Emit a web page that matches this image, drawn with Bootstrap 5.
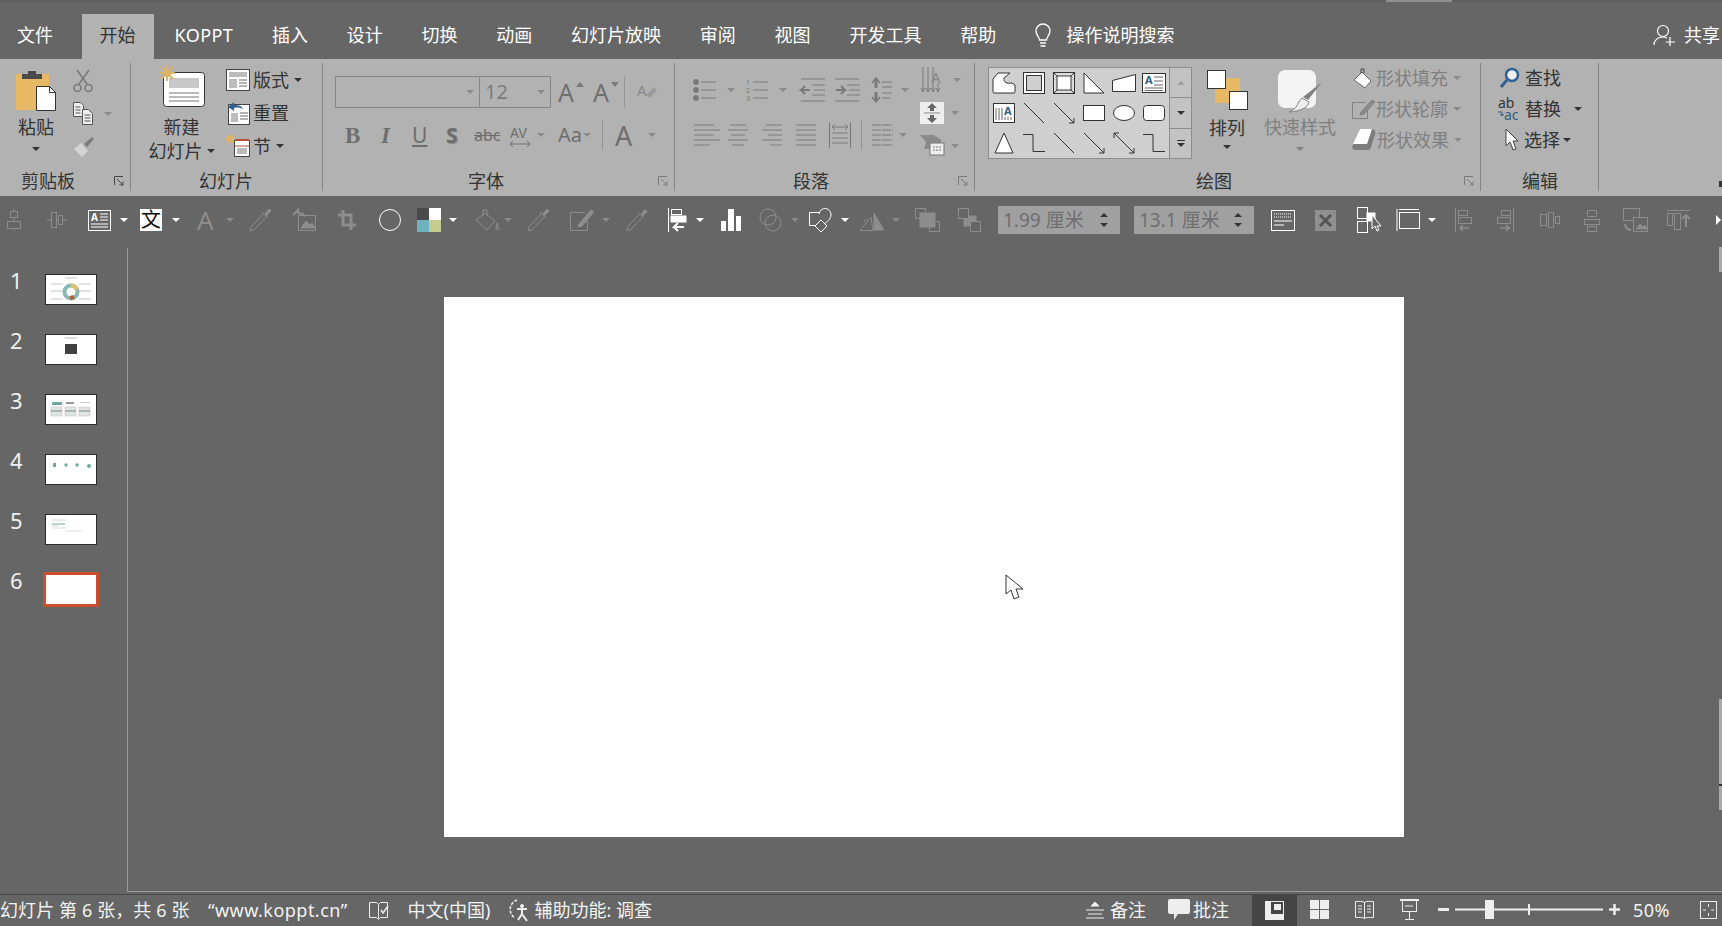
<!DOCTYPE html>
<html lang="zh-CN">
<head>
<meta charset="utf-8">
<title>PowerPoint</title>
<link rel="stylesheet" href="https://cdn.jsdelivr.net/npm/bootstrap@5.3.0/dist/css/bootstrap.min.css">
<style>
html,body{height:100%}
body{width:1722px;height:926px;overflow:hidden;background:#666;font-family:"Noto Sans","Noto Sans CJK SC",sans-serif;font-size:18px;line-height:24px;color:#fff}
svg{display:block;flex:none;overflow:visible}
.s1{margin-left:1px}.s2{margin-left:2px}.s3{margin-left:3px}.s4{margin-left:4px}.s5{margin-left:5px}.s6{margin-left:6px}.s7{margin-left:7px}.s8{margin-left:8px}.s9{margin-left:9px}.s10{margin-left:10px}.s11{margin-left:11px}.s12{margin-left:12px}.s13{margin-left:13px}.s14{margin-left:14px}.s15{margin-left:15px}.s16{margin-left:16px}.s17{margin-left:17px}.s18{margin-left:18px}.s19{margin-left:19px}.s20{margin-left:20px}.s21{margin-left:21px}.s22{margin-left:22px}.s23{margin-left:23px}.s24{margin-left:24px}.s25{margin-left:25px}.s26{margin-left:26px}.s30{margin-left:30px}
.topbar{height:59px;background:#666}
.topline{height:2px;background:#5f5f5f}
.topmark{width:66px;height:2px;margin-left:1386px;background:#8f8f8f}
.tabrow{height:57px;padding-top:12px}
.tabitem{height:45px;padding:0 19.4px 3px;display:flex;align-items:center;color:#fff;white-space:nowrap}
.tabfile{padding:0 29px 3px 17px}
.tabhome{padding:0 18.500px 3px 17.500px;background:#b3b3b3;color:#333}
.tabkop{letter-spacing:.4px;padding-left:20.500px}
.tabbulb{padding-left:0;padding-right:0;margin-left:18px}
.tabsearch{padding:0 0 3px;margin-left:15px}
.tabshare{margin-left:auto;padding:0 2px 3px 0}
.ribbon{height:137px;background:#b2b2b2;color:#333}
.rgroup{height:128px;margin-top:4px;display:flex;flex-direction:column;border-right:1px solid #858585;flex:none}
.w1{width:131px}.w2{width:192px}.w3{width:352px}.w4{width:300px}.w5{width:506px}.w6{width:118px}
.rbody{height:109px;display:flex}
.rlabel{height:20px;line-height:20px;display:flex;align-items:center;margin-top:-1px;color:#333}
.l1{margin-left:21px}.l2{margin-left:68px}.l3{margin-left:145px}.l4{margin-left:118px}.l5{margin-left:221px}.l6{margin-left:41px}
.launch{margin-left:auto;margin-right:6px}
.rcolumn{display:flex;flex-direction:column;align-items:center}
.col-paste{width:52px;margin-left:10px;padding-top:5px}
.col-new{width:67px;margin-left:17px;padding-top:2px}
.col-arr{width:62px;margin-left:4px;padding-top:7px}
.col-quick{width:86px;margin-left:-1px;padding-top:7px}
.tx-top{margin-top:4px}
.tx-arr{margin-top:6px}
.tx-quick{margin-top:2px}
.tx-new{margin-top:8px}
.cr-low{margin-top:8px}
.cr-arr{margin-top:5px}
.rw33{height:33px;display:flex;align-items:center;white-space:nowrap}
.rw32{height:32px;display:flex;align-items:center;white-space:nowrap}
.rw31{height:31px;display:flex;align-items:center;white-space:nowrap}
.stack-clip{padding-top:1px}
.stack-slide{padding-top:0}
.stack31{margin-top:-1px}
.stack-para{padding-top:1px}
.gaprow{margin-top:11px}
.gaprow2{margin-top:13px}
.pad11{padding-top:11px}
.pad13{padding-top:13px}
.cr{display:inline-block;flex:none;width:8px;height:4px;border-style:solid;border-width:4px 4px 0;border-color:#3c3c3c transparent transparent}
.cr.dim{border-top-color:#808080}
.cr.wh{border-top-color:#fff}
.cr.dk{border-top-color:#8a8a8a}
.cr.up{border-width:0 4px 4px;border-color:transparent transparent #333}
.cr.dn{border-top-color:#333}
.dimtx{color:#808080}
.combo{height:32px;border:1px solid #868686;display:flex;align-items:center;flex:none;color:#7c7c7c;font-size:20px}
.combo1{width:145px;justify-content:flex-end;padding-right:5px}
.combo2{width:71px;border-left:0;padding:0 5px;justify-content:space-between}
.fx{color:#6e6e6e;flex:none;display:block;line-height:1}
.fx-b{font-family:"Liberation Serif",serif;font-weight:700;font-size:23px;width:14px}
.fx-i{font-family:"Liberation Serif",serif;font-style:italic;font-weight:700;font-size:23px;width:12px}
.fx-u{font-size:21px;width:14px;text-decoration:underline}
.fx-s{font-weight:700;font-size:21px;width:14px;text-shadow:1px 1px 1px #888}
.fx-abc{font-size:16px;width:28px;text-decoration:line-through}
.fx-aa{font-size:20px;width:24px}
.fx-a{font-size:27px;width:17px}
.fx-big{font-size:25px;width:18px}
.vsep{width:1px;height:30px;background:#959595;flex:none}
.gallery{width:204px;height:92px;margin:4px 0 0 13px;background:#cfcfcf;border:1px solid #8d8d8d;display:flex;flex:none}
.gal-grid{width:180px;display:grid;grid-template-columns:repeat(6,1fr);grid-template-rows:repeat(3,1fr);justify-items:center;align-items:center}
.gal-side{flex:1;border-left:1px solid #8d8d8d;display:flex;flex-direction:column;background:#c3c3c3}
.gal-btn{flex:1;display:flex;align-items:center;justify-content:center;flex-direction:column;gap:2px}
.gal-btn+.gal-btn{border-top:1px solid #8d8d8d}
.bar{display:block;width:8px;height:1px;background:#333}
.edge-mark{width:3px;height:6px;background:#333;margin:122px 0 0 0}
.ribbon-rest{flex:1;display:flex;justify-content:flex-end}
.toolstrip{height:52px;padding-bottom:4px;background:#666;display:flex;align-items:center}
.tb-wen{width:22px;height:22px;background:#fff;color:#111;font-size:20px;line-height:22px;text-align:center;flex:none}
.tb-a{width:16px;color:#8d8d8d;font-size:26px;line-height:1;flex:none}
.spin{height:28px;background:#a0a0a0;display:flex;align-items:center;flex:none;color:#6f6f6f;font-size:19px;white-space:nowrap;padding:0 5px}
.spin1{width:122px}.spin2{width:120px}
.spin-ar{margin-left:auto;display:flex;flex-direction:column;gap:6px;margin-right:7px}
.wedge{width:0;height:0;border-style:solid;border-width:5px 0 5px 5px;border-color:transparent transparent transparent #fff;flex:none}
.mainrow{height:644px;display:flex}
.pane{width:128px;border-right:1px solid #9a9a9a;border-bottom:0;padding-top:26px;flex:none}
.thumbrow{height:60px;display:flex}
.numlabel{width:12px;margin-left:10px;margin-top:-6px;font-size:22px;line-height:24px;color:#f0f0f0}
.thumbbox{margin-left:23px;width:52px;height:31px;background:#fff;outline:1px solid #2b2b2b;outline-offset:-1px}
.thumbbox.sel{outline:3px solid #c8502e;outline-offset:-1px}
.canvas{flex:1;border-bottom:1px solid #9a9a9a;display:flex;justify-content:center;padding-top:49px}
.slidepage{width:960px;height:540px;background:#fff;position:relative;flex:none}
.arrowptr{position:absolute;left:561px;top:277px}
.scrollstrip{width:3px;border-bottom:1px solid #9a9a9a;flex:none;display:flex;flex-direction:column}
.sc1{height:25px;background:#aaa;margin-top:-1px}
.sc2{height:427px}
.sc3{height:85px;background:#aaa}
.sc4{height:2px;background:#333}
.sc5{height:24px;background:#aaa}
.statusbar{height:34px;padding-top:2px;background:#666}
.statusin{height:32px;border-top:1px solid #484848;padding-bottom:2px;display:flex;align-items:center;white-space:nowrap;color:#f3f3f3;padding-right:5px}
.st-1{width:190px;flex:none;letter-spacing:.1px}
.st-q{letter-spacing:.47px}
.st-act{width:45px;height:31px;margin-bottom:-2px;background:#454545;display:flex;align-items:center;justify-content:center;flex:none}
.st-right{margin-left:auto}
.st-pct{letter-spacing:.5px}
</style>
</head>
<body>
<div class="topbar">
  <div class="topline"><div class="topmark"></div></div>
  <nav class="tabrow d-flex">
    <div class="tabitem tabfile">文件</div>
    <div class="tabitem tabhome">开始</div>
    <div class="tabitem tabkop">KOPPT</div>
    <div class="tabitem">插入</div>
    <div class="tabitem">设计</div>
    <div class="tabitem">切换</div>
    <div class="tabitem">动画</div>
    <div class="tabitem">幻灯片放映</div>
    <div class="tabitem">审阅</div>
    <div class="tabitem">视图</div>
    <div class="tabitem">开发工具</div>
    <div class="tabitem">帮助</div>
    <div class="tabitem tabbulb"><svg width="18" height="24" viewBox="0 0 18 24" fill="none" stroke="#fff" stroke-width="1.3"><path d="M5.5 17c0-3-3.5-4.500-3.500-9a7 7 0 0 1 14 0c0 4.500-3.500 6-3.500 9z"/><path d="M6 20h6M6.500 23h5"/></svg></div>
    <div class="tabitem tabsearch">操作说明搜索</div>
    <div class="tabitem tabshare"><svg width="23" height="23" viewBox="0 0 23 23" fill="none" stroke="#fff" stroke-width="1.200" class="me-2"><circle cx="10" cy="7" r="5.500"/><path d="M1 21c0-5 4-8 9-8 2 0 3 .5 4 1"/><path d="M17 13v9M13 18h9"/></svg>共享</div>
  </nav>
</div>

<div class="ribbon d-flex">
  <!-- clipboard -->
  <section class="rgroup w1">
    <div class="rbody">
      <div class="rcolumn col-paste">
        <svg width="40" height="43" viewBox="0 0 40 43"><rect x="0" y="6" width="33" height="36" fill="#e8b964"/><path d="M6 6h6V3h8v3h6v5H6z" fill="#4a4a4a"/><path d="M20.500 18.500h13l6 6v18h-19z" fill="#fff" stroke="#333"/><path d="M33.500 18.500v6h6" fill="none" stroke="#333"/></svg>
        <div class="tx-top">粘贴</div>
        <span class="cr dn cr-low"></span>
      </div>
      <div class="stack-clip s11">
        <div class="rw33"><svg width="20" height="24" viewBox="0 0 20 24" fill="none" stroke="#7b7b7b" stroke-width="1.700"><path d="M4 1l10 14M16 1L6 15"/><circle cx="4.500" cy="19" r="3.500"/><circle cx="15.500" cy="19" r="3.500"/></svg></div>
        <div class="rw33"><svg width="20" height="23" viewBox="0 0 20 23" fill="#eee" stroke="#555"><path d="M.5.500h7l3 3v11H.500z"/><path d="M9.500 7.500h6l4 4v11h-10z"/><path d="M2.500 5h5M2.500 8h5M2.500 11h5M11.500 13h6M11.500 16h6M11.500 19h6" fill="none"/></svg><span class="cr dk s11"></span></div>
        <div class="rw33"><svg width="22" height="22" viewBox="0 0 22 22"><path d="M1 13l7-6 7 8-6 6z" fill="#d3d3d3"/><path d="M11 8l8-7 2 2-7 8z" fill="#7b7b7b"/></svg></div>
      </div>
    </div>
    <div class="rlabel"><span class="l1">剪贴板</span><svg class="launch" width="10" height="10" viewBox="0 0 10 10" fill="none" stroke="#444"><path d="M.5 9V.500H9M3 3l6 6M5.500 9H9V5.500"/></svg></div>
  </section>

  <!-- slides -->
  <section class="rgroup w2">
    <div class="rbody">
      <div class="rcolumn col-new">
        <svg width="46" height="42" viewBox="0 0 46 42"><rect x="4.500" y="7.500" width="41" height="34" rx="3" fill="#fff" stroke="#333"/><rect x="10" y="13" width="30" height="10" fill="#c8c8c8"/><path d="M10 28h30M10 32h30M10 36h30" stroke="#777"/><path d="M8 0v16M0 8h16M2 2l12 12M14 2L2 14" stroke="#dcb36a" stroke-width="2"/><circle cx="8" cy="8" r="4" fill="#dcb36a"/></svg>
        <div class="tx-new">新建</div>
        <div class="d-flex align-items-center">幻灯片<span class="cr dn s4"></span></div>
      </div>
      <div class="stack-slide s11">
        <div class="rw33"><svg width="24" height="22" viewBox="0 0 24 22"><rect x=".5" y=".5" width="23" height="21" fill="#fff" stroke="#444"/><rect x="3" y="3" width="18" height="5" fill="#bbb"/><rect x="3" y="10" width="8" height="9" fill="#bbb"/><path d="M13 11h8M13 14h8M13 17h8" stroke="#666"/></svg><span class="s3">版式</span><span class="cr dn s5"></span></div>
        <div class="rw33"><svg width="24" height="24" viewBox="0 0 24 24"><rect x="2.500" y="3.500" width="21" height="20" fill="#fff" stroke="#444"/><rect x="5" y="12" width="7" height="9" fill="#bbb"/><path d="M14 12h8M14 15h8M14 18h8" stroke="#666"/><path d="M2 6l6-5v3c5 0 8 1 9 4-2-1-5-2-9-1v3z" fill="#2f6191"/></svg><span class="s3">重置</span></div>
        <div class="rw33"><svg width="24" height="24" viewBox="0 0 24 24"><circle cx="4" cy="5" r="4" fill="#dcb36a"/><rect x="8.500" y="6.500" width="15" height="16" fill="#fff" stroke="#444"/><path d="M9 6h14" stroke="#b2523b" stroke-width="2"/><path d="M9 12h14" stroke="#b2523b"/><rect x="11" y="14" width="10" height="6" fill="#bbb"/></svg><span class="s3">节</span><span class="cr dn s5"></span></div>
      </div>
    </div>
    <div class="rlabel"><span class="l2">幻灯片</span></div>
  </section>

  <!-- font -->
  <section class="rgroup w3">
    <div class="rbody flex-column pad13">
      <div class="rw32">
        <div class="combo combo1 s12"><span class="cr dk"></span></div>
        <div class="combo combo2"><span>12</span><span class="cr dk"></span></div>
        <span class="fx fx-big s7">A</span><svg width="8" height="5" viewBox="0 0 8 5" class="mb-3"><path d="M0 5l4-5 4 5z" fill="#7a7a7a"/></svg>
        <span class="fx fx-big s9">A</span><svg width="8" height="5" viewBox="0 0 8 5" class="mb-3"><path d="M0 0l4 5 4-5z" fill="#7a7a7a"/></svg>
        <span class="vsep s5"></span>
        <svg class="s12" width="20" height="24" viewBox="0 0 20 24"><path d="M9 15l8-8 3 3-7 8z" fill="#9a9a9a"/><text x="0" y="16" font-size="15" fill="#888">A</text></svg>
      </div>
      <div class="rw32 gaprow">
        <span class="fx fx-b s22">B</span>
        <span class="fx fx-i s22">I</span>
        <span class="fx fx-u s19">U</span>
        <span class="fx fx-s s20">S</span>
        <span class="fx fx-abc s14">abc</span>
        <svg class="s7" width="22" height="24" viewBox="0 0 22 24"><text x="1" y="15" font-size="14" fill="#6e6e6e">AV</text><path d="M1 21h20M1 21l3-3M1 21l3 3M21 21l-3-3M21 21l-3 3" stroke="#6e6e6e" fill="none"/></svg>
        <span class="cr dk s6"></span>
        <span class="fx fx-aa s13">Aa</span>
        <span class="cr dk s1"></span>
        <span class="vsep s11"></span>
        <span class="fx fx-a s12">A</span>
        <span class="cr dk s16"></span>
      </div>
    </div>
    <div class="rlabel"><span class="l3">字体</span><svg class="launch" width="10" height="10" viewBox="0 0 10 10" fill="none" stroke="#7a7a7a"><path d="M.5 9V.500H9M3 3l6 6M5.500 9H9V5.500"/></svg></div>
  </section>

  <!-- paragraph -->
  <section class="rgroup w4">
    <div class="rbody">
      <div class="pad11 s18">
        <div class="rw32">
          <svg width="24" height="24" viewBox="0 0 24 24" stroke="#7a7a7a"><g fill="#7a7a7a"><circle cx="3" cy="4" r="2.500"/><circle cx="3" cy="12" r="2.500"/><circle cx="3" cy="20" r="2.500"/></g><path d="M8 4h15M8 12h15M8 20h15"/></svg><span class="cr dk s10"></span>
          <svg class="s11" width="22" height="24" viewBox="0 0 22 24" stroke="#7a7a7a"><text x="0" y="7" font-size="7" fill="#7a7a7a" stroke="none">1</text><text x="0" y="15" font-size="7" fill="#7a7a7a" stroke="none">2</text><text x="0" y="23" font-size="7" fill="#7a7a7a" stroke="none">3</text><path d="M7 4h15M7 12h15M7 20h15"/></svg><span class="cr dk s11"></span>
          <svg class="s13" width="25" height="24" viewBox="0 0 25 24" stroke="#7a7a7a" fill="none"><path d="M1 1h24M12 7h13M14 12h11M12 17h13M1 23h24"/><path d="M10 12H1l4-4M1 12l4 4" stroke-width="2"/></svg>
          <svg class="s10" width="25" height="24" viewBox="0 0 25 24" stroke="#7a7a7a" fill="none"><path d="M0 1h24M12 7h13M14 12h11M12 17h13M0 23h24"/><path d="M1 12h9l-4-4M10 12l-4 4" stroke-width="2"/></svg>
          <svg class="s12" width="20" height="26" viewBox="0 0 20 26" stroke="#7a7a7a" fill="none"><path d="M10 5h10M10 10h10M10 16h10M10 21h8"/><path d="M4 2v9M4 15v9" stroke-width="3"/><path d="M0 6l4-5 4 5M0 20l4 5 4-5" stroke-width="1.500"/></svg><span class="cr dk s9"></span>
        </div>
        <div class="rw32 gaprow2">
          <svg class="s1" width="26" height="24" viewBox="0 0 26 24" stroke="#7a7a7a"><path d="M0 2h20M0 7h26M0 12h20M0 17h26M0 22h16"/></svg>
          <svg class="s8" width="20" height="24" viewBox="0 0 20 24" stroke="#7a7a7a"><path d="M2 2h16M0 7h20M3 12h14M0 17h20M4 22h12"/></svg>
          <svg class="s14" width="20" height="24" viewBox="0 0 20 24" stroke="#7a7a7a"><path d="M4 2h16M0 7h20M6 12h14M0 17h20M8 22h12"/></svg>
          <svg class="s14" width="20" height="24" viewBox="0 0 20 24" stroke="#7a7a7a"><path d="M0 2h20M0 7h20M0 12h20M0 17h20M0 22h20"/></svg>
          <svg class="s13" width="22" height="26" viewBox="0 0 22 26" stroke="#7a7a7a" fill="none"><path d="M.5 0v26M21.500 0v26M3 11h16M3 16h16M3 21h16"/><path d="M3 5h16M3 5l3-3M3 5l3 3M19 5l-3-3M19 5l-3 3"/></svg>
          <span class="vsep s10"></span>
          <svg class="s10" width="21" height="24" viewBox="0 0 21 24" stroke="#7a7a7a"><path d="M0 2h21M0 7h21M0 12h21M0 17h21M0 22h21" stroke-dasharray="9 1"/></svg><span class="cr dk s6"></span>
        </div>
      </div>
      <div class="stack-para s11">
        <div class="rw32"><svg width="25" height="26" viewBox="0 0 25 26" stroke="#7a7a7a" fill="none"><path d="M3 0v25M8 0v25M13 0v25M1 21l2 4 2-4M6 21l2 4 2-4M11 21l2 4 2-4M16 21l2 4 2-4M18 16v9"/><text x="11" y="16" font-size="15" fill="#858585" stroke="none">A</text></svg><span class="cr dk s8"></span></div>
        <div class="rw33"><svg width="24" height="22" viewBox="0 0 24 22"><rect width="24" height="22" fill="#eee"/><path d="M4 11h16" stroke="#888"/><path d="M12 1l5 5h-3v3h-4V6H7zM12 21l5-5h-3v-3h-4v3H7z" fill="#666"/></svg><span class="cr dk s7"></span></div>
        <div class="rw33"><svg width="24" height="22" viewBox="0 0 24 22"><path d="M0 0h14l7 5v3H12v6H4L6 7z" fill="#8a8a8a"/><rect x="10" y="8" width="14" height="12" fill="#eee" stroke="#777"/><path d="M13 12h8M13 15h8" stroke="#777" stroke-dasharray="2 1"/></svg><span class="cr dk s7"></span></div>
      </div>
    </div>
    <div class="rlabel"><span class="l4">段落</span><svg class="launch" width="10" height="10" viewBox="0 0 10 10" fill="none" stroke="#7a7a7a"><path d="M.5 9V.500H9M3 3l6 6M5.500 9H9V5.500"/></svg></div>
  </section>

  <!-- drawing -->
  <section class="rgroup w5">
    <div class="rbody">
      <div class="gallery">
        <div class="gal-grid">
          <svg width="24" height="22" viewBox="0 0 24 22" fill="#fff" stroke="#333"><path d="M6 1h12l-6 5c-1 4 3 6 8 5l3 2v7a1 1 0 0 1-1 1H2a1 1 0 0 1-1-1V7z"/></svg>
          <svg width="22" height="22" viewBox="0 0 22 22" fill="none" stroke="#333"><rect x=".5" y=".5" width="21" height="21" fill="#fff"/><rect x="3.500" y="3.500" width="15" height="15" fill="#cfcfcf"/></svg>
          <svg width="22" height="22" viewBox="0 0 22 22" fill="none" stroke="#333"><rect x=".5" y=".5" width="21" height="21" fill="#ddd"/><rect x="4" y="4" width="14" height="14" fill="#fff"/><path d="M1 1l3 3M21 1l-3 3M1 21l3-3M21 21l-3-3"/></svg>
          <svg width="22" height="22" viewBox="0 0 22 22" fill="#fff" stroke="#333"><path d="M1 1v20h20z"/></svg>
          <svg width="24" height="18" viewBox="0 0 24 18" fill="#fff" stroke="#333"><path d="M.5 6.500L23.500.500v17H.500z"/></svg>
          <svg width="24" height="20" viewBox="0 0 24 20" fill="#fff" stroke="#333"><rect x=".5" y=".5" width="23" height="19"/><text x="3" y="11" font-size="11" font-weight="700" fill="#2f5d85" stroke="none">A</text><path d="M12 4h9M12 8h9M12 12h9M3 15h18M3 17.500h18" stroke="#666"/></svg>

          <svg width="22" height="20" viewBox="0 0 22 20" fill="#fff" stroke="#333"><rect x=".5" y=".5" width="21" height="19"/><path d="M3 5v12M6 5v12M9 5v12M12 14v3M15 14v3M18 14v3" stroke="#666"/><text x="11" y="12" font-size="11" font-weight="700" fill="#2f5d85" stroke="none">A</text></svg>
          <svg width="22" height="22" viewBox="0 0 22 22" stroke="#333"><path d="M1 1l20 20"/></svg>
          <svg width="22" height="22" viewBox="0 0 22 22" stroke="#333" fill="none"><path d="M1 1l20 20M21 16v5h-5"/></svg>
          <svg width="22" height="16" viewBox="0 0 22 16" fill="#fff" stroke="#333"><rect x=".5" y=".5" width="21" height="15"/></svg>
          <svg width="22" height="16" viewBox="0 0 22 16" fill="#fff" stroke="#333"><ellipse cx="11" cy="8" rx="10.500" ry="7.500"/></svg>
          <svg width="22" height="16" viewBox="0 0 22 16" fill="#fff" stroke="#333"><rect x=".5" y=".5" width="21" height="15" rx="3"/></svg>

          <svg width="20" height="22" viewBox="0 0 20 22" fill="#fff" stroke="#333"><path d="M10 1l9 20H1z"/></svg>
          <svg width="22" height="18" viewBox="0 0 22 18" fill="none" stroke="#333"><path d="M0 .5h10v17h12"/></svg>
          <svg width="22" height="22" viewBox="0 0 22 22" stroke="#333"><path d="M1 1l20 20"/></svg>
          <svg width="22" height="22" viewBox="0 0 22 22" stroke="#333" fill="none"><path d="M1 1l20 20M21 16v5h-5"/></svg>
          <svg width="22" height="22" viewBox="0 0 22 22" stroke="#333" fill="none"><path d="M1 1l20 20M21 16v5h-5M1 6V1h5"/></svg>
          <svg width="22" height="18" viewBox="0 0 22 18" fill="none" stroke="#333"><path d="M0 .5h10v17h12"/></svg>
        </div>
        <div class="gal-side">
          <div class="gal-btn"><span class="cr up opacity-25"></span></div>
          <div class="gal-btn"><span class="cr dn"></span></div>
          <div class="gal-btn"><span class="bar"></span><span class="cr dn"></span></div>
        </div>
      </div>
      <div class="rcolumn col-arr">
        <svg width="41" height="40" viewBox="0 0 41 40"><rect x="8" y="8" width="25" height="25" fill="#e8b964"/><rect x=".5" y=".5" width="18" height="18" fill="#fff" stroke="#333"/><rect x="22.500" y="21.500" width="18" height="18" fill="#fff" stroke="#333"/></svg>
        <div class="tx-arr">排列</div>
        <span class="cr dn cr-arr"></span>
      </div>
      <div class="rcolumn col-quick">
        <svg width="44" height="43" viewBox="0 0 44 43"><rect x="0" y="0" width="38" height="38" rx="7" fill="#f4f4f4"/><path d="M44 12L30 30l-5-3z" fill="#808080"/><path d="M24 28l7 4c-1 5-7 9-20 10 5-2 8-5 9-9z" fill="#eee" stroke="#808080"/></svg>
        <div class="tx-quick dimtx">快速样式</div>
        <span class="cr dim cr-low"></span>
      </div>
      <div class="stack31 s9">
        <div class="rw31 dimtx"><svg width="20" height="22" viewBox="0 0 20 22"><path d="M10 5l9 9-6 7-11-8z" fill="#fff" stroke="#666"/><path d="M9 6V2h3v4" fill="none" stroke="#444"/></svg><span class="s4">形状填充</span><span class="cr dk s5"></span></div>
        <div class="rw31 dimtx"><svg width="23" height="22" viewBox="0 0 23 22" fill="none" stroke="#808080"><path d="M.5 4.500h13M.5 4.500v16h15V12"/><path d="M9 14l11-12 3 2-11 12-4 1z" fill="#8a8a8a"/></svg><span class="s1">形状轮廓</span><span class="cr dk s5"></span></div>
        <div class="rw31 dimtx"><svg width="24" height="23" viewBox="0 0 24 23"><path d="M8 1h12c3 0 4 3 3 6l-4 12c-1 3-2 3-4 3H3c-3 0-3-3-2-5z" fill="#7c7c7c"/><path d="M8 1h12l-5 15H1z" fill="#fff"/></svg><span class="s1">形状效果</span><span class="cr dk s5"></span></div>
      </div>
    </div>
    <div class="rlabel"><span class="l5">绘图</span><svg class="launch" width="10" height="10" viewBox="0 0 10 10" fill="none" stroke="#7a7a7a"><path d="M.5 9V.500H9M3 3l6 6M5.500 9H9V5.500"/></svg></div>
  </section>

  <!-- editing -->
  <section class="rgroup w6">
    <div class="rbody">
      <div class="stack31 s17">
        <div class="rw31"><svg class="s2" width="20" height="21" viewBox="0 0 20 21" fill="none"><circle cx="12" cy="8" r="6" fill="#f0f0f0" stroke="#2f6191" stroke-width="2.500"/><path d="M7 13l-6 7" stroke="#2f6191" stroke-width="3"/></svg><span class="s5">查找</span></div>
        <div class="rw31"><svg width="24" height="24" viewBox="0 0 24 24"><text x="0" y="11" font-size="14" fill="#333">ab</text><text x="6" y="23" font-size="14" fill="#2f5d85">ac</text><path d="M0 15h4v3M2 17l2 2 2-2" stroke="#2f5d85" fill="none"/></svg><span class="s3">替换</span><span class="cr dn s13"></span></div>
        <div class="rw31"><svg class="s7" width="14" height="23" viewBox="0 0 14 23"><path d="M1 1v17l4-4 3 8 3-1-3-8h5z" fill="#fff" stroke="#444"/></svg><span class="s5">选择</span><span class="cr dn s3"></span></div>
      </div>
    </div>
    <div class="rlabel"><span class="l6">编辑</span></div>
  </section>
  <div class="ribbon-rest"><span class="edge-mark"></span></div>
</div>

<div class="toolstrip">
  <svg class="s7" width="14" height="22" viewBox="0 0 14 22" fill="none" stroke="#8d8d8d"><rect x="3.500" y="2.500" width="7" height="6"/><rect x=".5" y="12.500" width="13" height="7"/><path d="M7 0v2M7 9v3M7 20v2"/></svg>
  <svg class="s26" width="20" height="18" viewBox="0 0 20 18" fill="none" stroke="#8d8d8d"><rect x="4.500" y="1.500" width="5" height="15"/><rect x="11.500" y="4.500" width="4" height="9"/><path d="M0 9h4M10 9h1M16 9h4"/></svg>
  <svg class="s21" width="23" height="21" viewBox="0 0 23 21" fill="none" stroke="#fff"><rect x=".5" y=".5" width="22" height="20"/><text x="3" y="11" font-size="10" font-weight="700" fill="#fff" stroke="none">A</text><path d="M12 4h8M12 7h8M12 10h8M3 14h17M3 17h17"/></svg>
  <span class="cr wh s9"></span>
  <div class="tb-wen s12">文</div>
  <span class="cr wh s10"></span>
  <span class="tb-a s17">A</span>
  <span class="cr dk s13"></span>
  <svg class="s15" width="23" height="24" viewBox="0 0 23 24" fill="none" stroke="#8d8d8d"><path d="M14 6L2 19l-1 4 4-1L17 9"/><path d="M13 4l6 6M16 6l4-5 2 2-5 5" fill="#8d8d8d"/></svg>
  <svg class="s20" width="24" height="22" viewBox="0 0 24 22" fill="none" stroke="#8d8d8d"><rect x="6.500" y="6.500" width="17" height="15"/><path d="M9 19l5-7 4 4 2-2 3 5z" fill="#8d8d8d"/><path d="M1 6l5-5v3c3 0 5 1 7 3" stroke-width="2"/></svg>
  <svg class="s22" width="18" height="20" viewBox="0 0 18 20" fill="none" stroke="#8d8d8d" stroke-width="3"><path d="M5 0v15h13M0 5h13v15"/></svg>
  <svg class="s23" width="22" height="22" viewBox="0 0 22 22" fill="none" stroke="#fff"><circle cx="11" cy="11" r="10.500"/></svg>
  <svg class="s16" width="24" height="24" viewBox="0 0 24 24"><rect width="12" height="12" fill="#4a4a4a"/><rect x="12" width="12" height="12" fill="#fff"/><rect y="12" width="12" height="12" fill="#6fb1bc"/><rect x="12" y="12" width="12" height="12" fill="#c5cc8b"/></svg>
  <span class="cr wh s8"></span>
  <svg class="s18" width="25" height="24" viewBox="0 0 25 24" fill="none" stroke="#8d8d8d"><path d="M10 5l10 8-8 9-11-10z"/><path d="M8 8V2h4v6M22 15l2 6h-3z"/></svg>
  <span class="cr dk s4"></span>
  <svg class="s15" width="23" height="24" viewBox="0 0 23 24" fill="none" stroke="#8d8d8d"><path d="M14 6L2 19l-1 4 4-1L17 9"/><path d="M13 4l6 6M16 6l4-5 2 2-5 5" fill="#8d8d8d"/></svg>
  <svg class="s20" width="25" height="22" viewBox="0 0 25 22" fill="none" stroke="#8d8d8d"><path d="M.5 3.500h14M.5 3.500v18h17V12"/><path d="M9 15L21 1l3 2-12 14-4 1z" fill="#8d8d8d"/></svg>
  <span class="cr dk s7"></span>
  <svg class="s16" width="22" height="24" viewBox="0 0 23 24" fill="none" stroke="#8d8d8d"><path d="M14 6L2 19l-1 4 4-1L17 9"/><path d="M13 4l6 6M16 6l4-5 2 2-5 5" fill="#8d8d8d"/></svg>
  <svg class="s20" width="18" height="24" viewBox="0 0 18 24" fill="none" stroke="#fff"><path d="M.5 0v24"/><rect x="3.500" y="1.500" width="10" height="5"/><rect x="3" y="8" width="15" height="6" fill="#fff"/><path d="M16 19H6l4-4M6 19l4 4" stroke-width="2"/></svg>
  <span class="cr wh s10"></span>
  <svg class="s17" width="20" height="22" viewBox="0 0 20 22" fill="#fff"><rect x="0" y="12" width="5" height="10"/><rect x="7" y="0" width="6" height="22"/><rect x="15" y="7" width="5" height="15"/></svg>
  <svg class="s18" width="23" height="24" viewBox="0 0 23 24" fill="none" stroke="#8d8d8d"><circle cx="9" cy="9" r="8"/><circle cx="14" cy="15" r="8"/></svg>
  <span class="cr dk s9"></span>
  <svg class="s10" width="23" height="25" viewBox="0 0 23 25" fill="none" stroke="#fff"><path d="M11 4.500H.5v13H7"/><path d="M10 6a6 6 0 1 1 12 1c0 4-4 7-7 9"/><path d="M12 12l6 6-6 6-6-6z"/></svg>
  <span class="cr wh s9"></span>
  <svg class="s11" width="25" height="22" viewBox="0 0 25 22" fill="none" stroke="#8d8d8d"><path d="M0 21.500h13L11 8z"/><path d="M14 4l10 17H14z" fill="#8d8d8d"/><path d="M4 14c0-3 2-4 4-3"/></svg>
  <span class="cr dk s7"></span>
  <svg class="s15" width="25" height="24" viewBox="0 0 25 24" fill="none" stroke="#8d8d8d"><rect x=".5" y=".5" width="10" height="10"/><rect x="14.500" y="13.500" width="10" height="10"/><rect x="5" y="5" width="15" height="14" fill="#8d8d8d"/></svg>
  <svg class="s18" width="23" height="24" viewBox="0 0 23 24" fill="none" stroke="#8d8d8d"><rect x="6" y="8" width="12" height="10" fill="#8d8d8d"/><rect x=".5" y=".5" width="10" height="10" fill="#666"/><rect x="12.500" y="13.500" width="10" height="10" fill="#666"/></svg>

  <div class="spin spin1 s17"><span>1.99 厘米</span><span class="spin-ar"><span class="cr up"></span><span class="cr dn"></span></span></div>
  <div class="spin spin2 s14"><span>13.1 厘米</span><span class="spin-ar"><span class="cr up"></span><span class="cr dn"></span></span></div>

  <svg class="s17" width="24" height="21" viewBox="0 0 24 21" fill="none" stroke="#fff"><rect x=".5" y=".5" width="23" height="20"/><path d="M3 4h18M3 7h18" stroke-dasharray="1 1"/><path d="M3 11h18M3 15h10"/></svg>
  <svg class="s20" width="21" height="21" viewBox="0 0 21 21"><rect width="21" height="21" fill="#8f8f8f"/><path d="M5 5l11 11M16 5L5 16" stroke="#555" stroke-width="3"/></svg>
  <svg class="s21" width="24" height="26" viewBox="0 0 24 26" fill="none" stroke="#fff"><rect x=".5" y=".5" width="10" height="11"/><rect x=".5" y="14.500" width="10" height="11"/><rect x="10" y="6" width="8" height="8" fill="#fff"/><path d="M15 8v14l3-3 2 5 2-1-2-4h4z" fill="#666"/></svg>
  <svg class="s15" width="24" height="22" viewBox="0 0 24 22" fill="none" stroke="#fff"><rect x="3.500" y="3.500" width="20" height="16"/><path d="M1 0v22M3 .5h20"/></svg>
  <span class="cr wh s8"></span>
  <svg class="s19" width="17" height="24" viewBox="0 0 17 24" fill="none" stroke="#8d8d8d"><path d="M.5 0v24"/><rect x="3.500" y="2.500" width="9" height="5"/><rect x="3.500" y="9.500" width="13" height="6"/><path d="M14 20H5l3-3M5 20l3 3" stroke-width="1.500"/></svg>
  <svg class="s25" width="17" height="24" viewBox="0 0 17 24" fill="none" stroke="#8d8d8d"><path d="M16.500 0v24"/><rect x="4.500" y="2.500" width="9" height="5"/><rect x=".5" y="9.500" width="13" height="6"/><path d="M3 20h9l-3-3M12 20l-3 3" stroke-width="1.500"/></svg>
  <svg class="s23" width="23" height="18" viewBox="0 0 23 18" fill="none" stroke="#8d8d8d"><rect x="3.500" y="3.500" width="6" height="11"/><rect x="11.500" y="1.500" width="5" height="15"/><rect x="18.500" y="5.500" width="4" height="7"/></svg>
  <svg class="s24" width="16" height="24" viewBox="0 0 16 24" fill="none" stroke="#8d8d8d"><rect x="3.500" y="2.500" width="9" height="6"/><rect x=".5" y="11.500" width="15" height="5"/><rect x="3.500" y="18.500" width="9" height="5"/></svg>
  <svg class="s23" width="25" height="24" viewBox="0 0 25 24" fill="none" stroke="#8d8d8d"><rect x=".5" y=".5" width="16" height="12"/><rect x="10.500" y="9.500" width="14" height="14" fill="#666"/><path d="M13 21l4-5 3 3 2-2 2 4z" fill="#8d8d8d"/><path d="M2 16a6 6 0 0 0 6 6" stroke-width="2"/></svg>
  <svg class="s19" width="23" height="20" viewBox="0 0 23 20" fill="none" stroke="#8d8d8d"><path d="M0 .5h23"/><rect x=".5" y="3.500" width="5" height="12"/><rect x="7.500" y="3.500" width="6" height="16"/><path d="M19 17V5M15 9l4-4 4 4" stroke-width="2"/></svg>
  <span class="wedge s26"></span>
</div>

<div class="mainrow">
  <aside class="pane">
    <div class="thumbrow"><span class="numlabel">1</span><div class="thumbbox"><svg width="52" height="31" viewBox="0 0 52 31"><g stroke="#c4c4c4"><path d="M6 10h12M6 17h12M6 25h12M34 10h12M34 17h12M34 25h12M20 4h12"/></g><circle cx="26" cy="18" r="6.500" fill="none" stroke="#8ab7b2" stroke-width="4"/><path d="M26 11.500a6.500 6.500 0 0 1 6 4" fill="none" stroke="#e0c171" stroke-width="4"/><path d="M29 23l-4 1" stroke="#b85e33" stroke-width="4"/></svg></div></div>
    <div class="thumbrow"><span class="numlabel">2</span><div class="thumbbox"><svg width="52" height="31" viewBox="0 0 52 31"><path d="M20 4h12" stroke="#bdbdbd"/><rect x="20" y="10" width="12" height="10" fill="#404040"/></svg></div></div>
    <div class="thumbrow"><span class="numlabel">3</span><div class="thumbbox"><svg width="52" height="31" viewBox="0 0 52 31"><rect x="7" y="8" width="10" height="3" fill="#6ca9a2"/><rect x="21" y="8" width="8" height="2" fill="#999"/><rect x="35" y="8" width="10" height="1" fill="#ccc"/><g fill="#e3e3e3" stroke="#bbb" stroke-width=".5"><rect x="6" y="13" width="11" height="9"/><rect x="20" y="13" width="11" height="9"/><rect x="34" y="13" width="11" height="9"/></g><path d="M6 17h11M20 17h11M34 17h11" stroke="#6e8f8c"/></svg></div></div>
    <div class="thumbrow"><span class="numlabel">4</span><div class="thumbbox"><svg width="52" height="31" viewBox="0 0 52 31" fill="#6ca9a2"><rect x="8" y="9" width="3" height="4"/><circle cx="21" cy="11" r="1.700"/><circle cx="32" cy="11" r="1.700"/><circle cx="44" cy="12" r="2"/></svg></div></div>
    <div class="thumbrow"><span class="numlabel">5</span><div class="thumbbox"><svg width="52" height="31" viewBox="0 0 52 31"><path d="M7 6h14M7 12h6" stroke="#d6d6d6"/><path d="M7 10h13" stroke="#6ca9a2"/><path d="M20 17h17M7 14h14" stroke="#dedede"/></svg></div></div>
    <div class="thumbrow"><span class="numlabel">6</span><div class="thumbbox sel"></div></div>
  </aside>
  <main class="canvas">
    <div class="slidepage">
      <svg class="arrowptr" width="19" height="27" viewBox="0 0 19 27"><path d="M1 1v19l5-4 3 9 5-2-3-8h7z" fill="#fff" stroke="#333"/></svg>
    </div>
  </main>
  <div class="scrollstrip"><div class="sc1"></div><div class="sc2"></div><div class="sc3"></div><div class="sc4"></div><div class="sc5"></div></div>
</div>

<footer class="statusbar">
  <div class="statusin">
    <span class="st-1">幻灯片 第 6 张，共 6 张</span>
    <span class="s18 st-q">“www.koppt.cn”</span>
    <svg class="s21" width="20" height="20" viewBox="0 0 20 20" fill="none" stroke="#eee"><path d="M.5 2.500h7l2 2 2-2h7v15h-7l-2 2-2-2h-7zM9.500 4.500v14"/><path d="M12 10l2 3 5-7" stroke-width="1.500"/></svg>
    <span class="s19">中文(中国)</span>
    <svg class="s19" width="24" height="24" viewBox="0 0 24 24" fill="none" stroke="#eee"><path d="M8 2A10 10 0 0 0 6 20" stroke-dasharray="3 1.500" stroke-width="1.500"/><circle cx="13" cy="8" r="1.500" fill="#eee"/><path d="M8 11h10M13 12v4M13 16l-4 6M13 16l5 7" stroke-width="2"/></svg>
    <span class="s1">辅助功能: 调查</span>
    <svg class="st-right" width="18" height="18" viewBox="0 0 18 18" fill="#eee" stroke="#eee"><path d="M9 1l4 4H5z"/><path d="M0 9h18M2 13h14M0 17h18" fill="none"/></svg>
    <span class="s6">备注</span>
    <svg class="s22" width="22" height="21" viewBox="0 0 22 21" fill="#eee"><path d="M2 0h18a2 2 0 0 1 2 2v11a2 2 0 0 1-2 2H10l-4 6v-6H2a2 2 0 0 1-2-2V2a2 2 0 0 1 2-2z"/></svg>
    <span class="s3">批注</span>
    <div class="st-act s23"><svg width="19" height="19" viewBox="0 0 19 19"><rect x=".5" y=".5" width="18" height="18" fill="none" stroke="#eee"/><rect x="1" y="1" width="5" height="17" fill="#eee"/><rect x="1" y="13" width="17" height="5" fill="#eee"/><rect x="9" y="3" width="7" height="6" fill="#eee"/></svg></div>
    <svg class="s13" width="19" height="19" viewBox="0 0 19 19" fill="#eee"><rect width="9" height="9"/><rect x="10" width="9" height="9"/><rect y="10" width="9" height="9"/><rect x="10" y="10" width="9" height="9"/></svg>
    <svg class="s26" width="19" height="20" viewBox="0 0 19 20" fill="none" stroke="#eee"><path d="M9.500 2v17M.5 1.500C4 1.500 8 1 9.500 2.500 11 1 15 1.500 18.500 1.500v16c-3.500 0-7.500-.5-9 1-1.500-1.500-5.500-1-9-1z"/><path d="M3 6h4M3 9h4M3 12h4M12 6h4M12 9h4M12 12h4"/></svg>
    <svg class="s26" width="19" height="21" viewBox="0 0 19 21" fill="none" stroke="#eee"><path d="M0 1h19" stroke-width="2"/><rect x="2.500" y="1.500" width="14" height="11"/><path d="M5 7h8M9.500 13v7M5 20.500h9"/></svg>
    <svg class="s19" width="11" height="3" viewBox="0 0 11 3"><rect width="11" height="3" fill="#eee"/></svg>
    <svg class="s6" width="148" height="19" viewBox="0 0 148 19"><path d="M0 9.500h148" stroke="#eee" stroke-width="2"/><rect x="30" y="0" width="9" height="19" fill="#eee"/><path d="M74 4v11" stroke="#eee" stroke-width="2"/></svg>
    <svg class="s6" width="11" height="11" viewBox="0 0 11 11"><path d="M0 5.500h11M5.500 0v11" stroke="#eee" stroke-width="2.500"/></svg>
    <span class="s13 st-pct">50%</span>
    <svg class="s30" width="17" height="18" viewBox="0 0 17 18" fill="none" stroke="#eee"><rect x=".5" y=".5" width="16" height="17"/><path d="M8.500 3v3M8.500 12v3M3 9h3M11 9h3"/></svg>
  </div>
</footer>
<script src="https://cdn.jsdelivr.net/npm/bootstrap@5.3.0/dist/js/bootstrap.bundle.min.js"></script>
</body>
</html>
